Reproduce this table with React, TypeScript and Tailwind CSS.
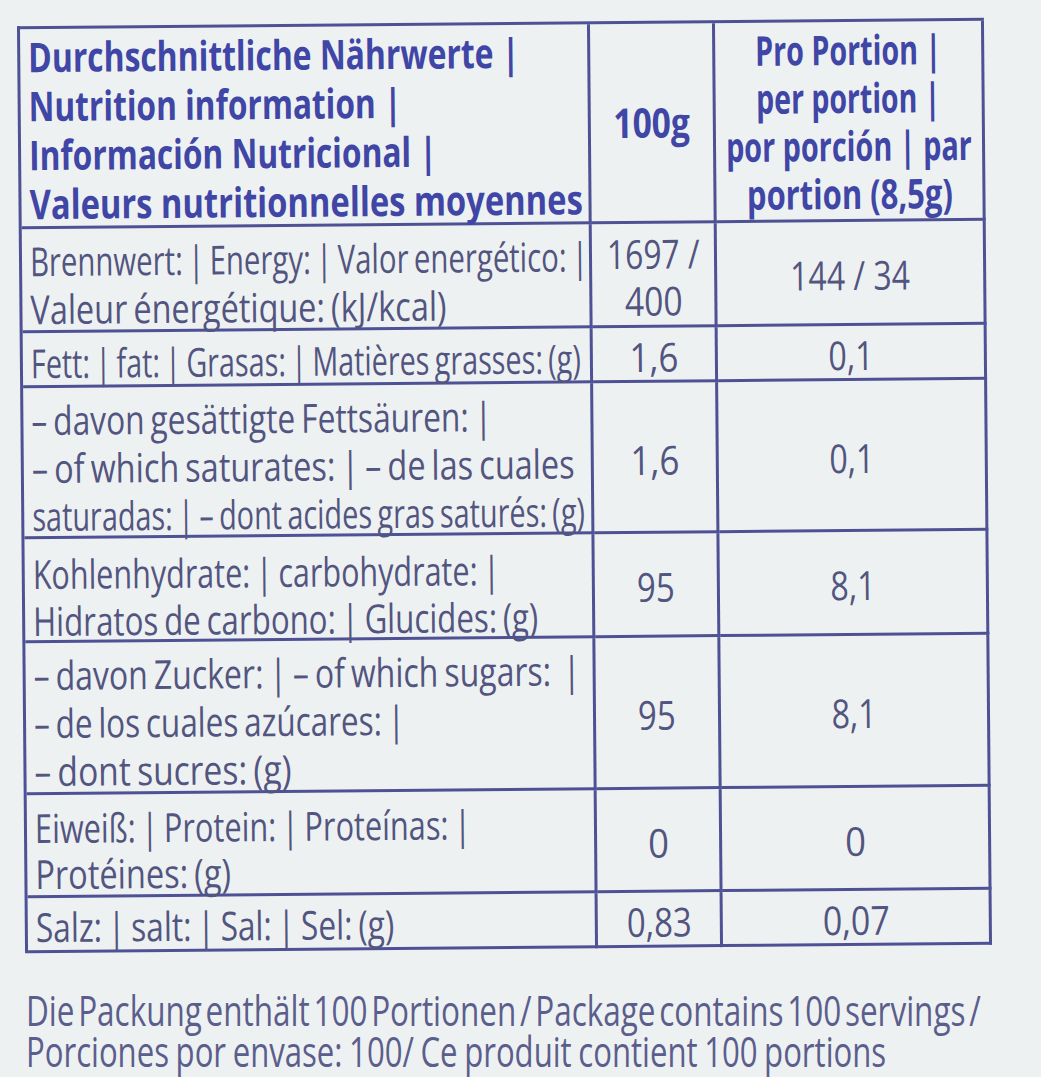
import React, { useLayoutEffect, useRef } from "react";

type Line = [string, number];

type Row = {
  pad: string;
  lh: string;
  label: Line[];
  v1: Line[];
  v2: Line[];
};

function Fit({ w, text, center }: { w: number; text: string; center?: boolean }) {
  const ref = useRef<HTMLSpanElement>(null);
  useLayoutEffect(() => {
    const el = ref.current;
    if (!el) return;
    const apply = () => {
      const nat = el.offsetWidth;
      if (nat > 0) el.style.transform = `scaleX(${w / nat})`;
    };
    apply();
    if (document.fonts && document.fonts.ready) {
      document.fonts.ready.then(apply);
    }
  }, [w, text]);
  return (
    <span
      ref={ref}
      className={`inline-block shrink-0 whitespace-pre ${center ? "origin-center" : "origin-left"}`}
    >
      {text}
    </span>
  );
}

const rows: Row[] = [
  {
    pad: "pt-[8px]",
    lh: "leading-[48px]",
    label: [
      ["Brennwert: | Energy: | Valor energético: |", 558],
      ["Valeur énergétique: (kJ/kcal)", 416],
    ],
    v1: [
      ["1697 /", 93],
      ["400", 58],
    ],
    v2: [["144 / 34", 120]],
  },
  {
    pad: "pt-[6px]",
    lh: "leading-[48px]",
    label: [["Fett: | fat: | Grasas: | Matières grasses: (g)", 550]],
    v1: [["1,6", 49]],
    v2: [["0,1", 45]],
  },
  {
    pad: "pt-[8px]",
    lh: "leading-[48px]",
    label: [
      ["– davon gesättigte Fettsäuren: |", 461],
      ["– of which saturates: | – de las cuales", 543],
      ["saturadas: | – dont acides gras saturés: (g)", 553],
    ],
    v1: [["1,6", 49]],
    v2: [["0,1", 45]],
  },
  {
    pad: "pt-[11px]",
    lh: "leading-[47px]",
    label: [
      ["Kohlenhydrate: | carbohydrate: |", 467],
      ["Hidratos de carbono: | Glucides: (g)", 505],
    ],
    v1: [["95", 38]],
    v2: [["8,1", 45]],
  },
  {
    pad: "pt-[8px]",
    lh: "leading-[48px]",
    label: [
      ["– davon Zucker: | – of which sugars:  |", 547],
      ["– de los cuales azúcares: |", 371],
      ["– dont sucres: (g)", 257],
    ],
    v1: [["95", 38]],
    v2: [["8,1", 45]],
  },
  {
    pad: "pt-[10px]",
    lh: "leading-[46px]",
    label: [
      ["Eiweiß: | Protein: | Proteínas: |", 436],
      ["Protéines: (g)", 196],
    ],
    v1: [["0", 21]],
    v2: [["0", 21]],
  },
  {
    pad: "pt-[5px]",
    lh: "leading-[48px]",
    label: [["Salz: | salt: | Sal: | Sel: (g)", 358]],
    v1: [["0,83", 65]],
    v2: [["0,07", 67]],
  },
];

const cell = "border-r-[3px] border-b-[3px] border-[#4e5295]";

export default function App() {
  return (
    <div className="w-[1041px] h-[1077px] overflow-hidden bg-[#eef1f1] font-['Open_Sans','Noto_Sans',sans-serif]">
      <div className="ml-[21px] mt-[22px] w-[967px] grid grid-cols-[570px_125px_269px] grid-rows-[200px_104px_55px_151px_104px_152px_103px_55px] border-t-[3px] border-l-[3px] border-[#4e5295] rotate-[-0.5deg]">
        {/* Header */}
        <div className={`${cell} pl-[8px] pt-[3px] text-[41px] font-bold leading-[49px] text-[#3f46a6]`}>
          <div><Fit w={491} text="Durchschnittliche Nährwerte |" /></div>
          <div><Fit w={373} text="Nutrition information |" /></div>
          <div><Fit w={408} text="Información Nutricional |" /></div>
          <div><Fit w={553} text="Valeurs nutritionnelles moyennes" /></div>
        </div>
        <div className={`${cell} flex items-center justify-center pt-[1px] text-[41px] font-bold text-[#3f46a6]`}>
          <Fit w={77} text="100g" center />
        </div>
        <div className={`${cell} pt-[3px] text-[41px] font-bold leading-[48px] text-[#3f46a6]`}>
          <div className="flex justify-center"><Fit w={186} text="Pro Portion |" center /></div>
          <div className="flex justify-center"><Fit w={184} text="per portion |" center /></div>
          <div className="flex justify-center"><Fit w={246} text="por porción | par" center /></div>
          <div className="flex justify-center"><Fit w={206} text="portion (8,5g)" center /></div>
        </div>

        {rows.map((r, i) => (
          <React.Fragment key={i}>
            <div className={`${cell} ${r.pad} ${r.lh} pl-[8px] text-[40px] text-[#525580] [word-spacing:-3px]`}>
              {r.label.map(([t, w], j) => (
                <div key={j}>
                  <Fit w={w} text={t} />
                </div>
              ))}
            </div>
            <div className={`${cell} flex flex-col items-center justify-center pt-[4px] text-[40px] leading-[47px] text-[#525580]`}>
              {r.v1.map(([t, w], j) => (
                <Fit key={j} w={w} text={t} center />
              ))}
            </div>
            <div className={`${cell} flex flex-col items-center justify-center pt-[4px] text-[40px] leading-[47px] text-[#525580]`}>
              {r.v2.map(([t, w], j) => (
                <Fit key={j} w={w} text={t} center />
              ))}
            </div>
          </React.Fragment>
        ))}
      </div>

      <div className="ml-[26px] mt-[40px] text-[42px] leading-[41px] text-[#5b5e8c]">
        <div className="[word-spacing:-6px]">
          <Fit w={955} text="Die Packung enthält 100 Portionen / Package contains 100 servings /" />
        </div>
        <div className="[word-spacing:-2px]">
          <Fit w={860} text="Porciones por envase: 100/ Ce produit contient 100 portions" />
        </div>
      </div>
    </div>
  );
}
